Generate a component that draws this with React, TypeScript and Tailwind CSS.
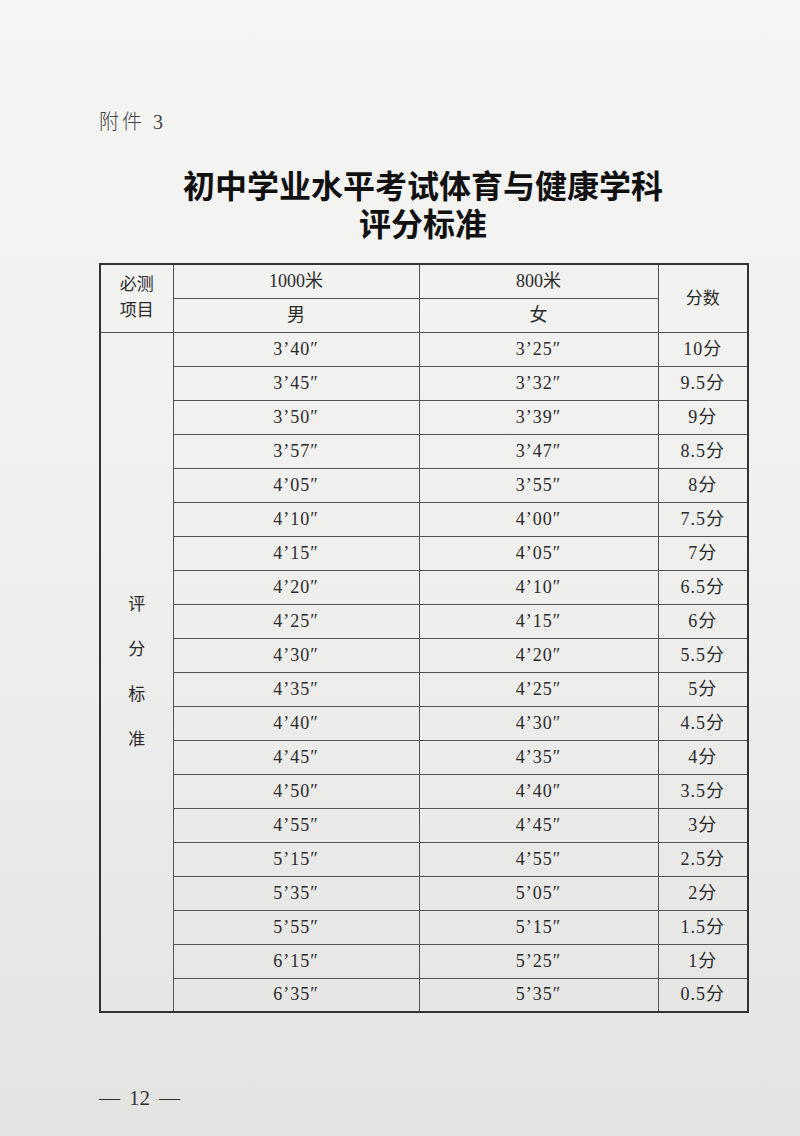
import React from 'react';

const rows: [string, string, string][] = [
    ['3’40″', '3’25″', '10分'],
    ['3’45″', '3’32″', '9.5分'],
    ['3’50″', '3’39″', '9分'],
    ['3’57″', '3’47″', '8.5分'],
    ['4’05″', '3’55″', '8分'],
    ['4’10″', '4’00″', '7.5分'],
    ['4’15″', '4’05″', '7分'],
    ['4’20″', '4’10″', '6.5分'],
    ['4’25″', '4’15″', '6分'],
    ['4’30″', '4’20″', '5.5分'],
    ['4’35″', '4’25″', '5分'],
    ['4’40″', '4’30″', '4.5分'],
    ['4’45″', '4’35″', '4分'],
    ['4’50″', '4’40″', '3.5分'],
    ['4’55″', '4’45″', '3分'],
    ['5’15″', '4’55″', '2.5分'],
    ['5’35″', '5’05″', '2分'],
    ['5’55″', '5’15″', '1.5分'],
    ['6’15″', '5’25″', '1分'],
    ['6’35″', '5’35″', '0.5分'],
];

const cell = 'border border-[#555] text-center align-middle p-0';

const App: React.FC = () => {
    return (
        <div className="w-[800px] h-[1136px] bg-linear-to-b from-[#f5f5f4] via-[#efefee] to-[#e3e3e2] text-[#2a2a2a] font-['Liberation_Serif','Noto_Sans_CJK_SC',serif] overflow-hidden">
            <div className="pt-[108px] pl-[99px] pr-[53px]">
                {/* Attachment label */}
                <div className="text-[20px] leading-[28px] text-[#444] tracking-[3px] font-light">附件 3</div>

                {/* Title */}
                <div className="mt-[29px] text-center font-['Noto_Sans_CJK_SC',sans-serif] font-bold text-[32px] leading-[38px] text-[#111]">
                    <div>初中学业水平考试体育与健康学科</div>
                    <div>评分标准</div>
                </div>

                {/* Score table */}
                <table className="mt-[22px] w-[648px] border-collapse border-2 border-[#333] text-[18px] table-fixed">
                    <colgroup>
                        <col className="w-[73px]" />
                        <col className="w-[246px]" />
                        <col className="w-[239px]" />
                        <col className="w-[90px]" />
                    </colgroup>
                    <thead>
                        <tr className="h-[34px]">
                            <td rowSpan={2} className={`${cell} text-[17px] leading-[26px]`}>
                                必测<br />项目
                            </td>
                            <td className={cell}>1000米</td>
                            <td className={cell}>800米</td>
                            <td rowSpan={2} className={`${cell} text-[17px]`}>分数</td>
                        </tr>
                        <tr className="h-[34px]">
                            <td className={cell}>男</td>
                            <td className={cell}>女</td>
                        </tr>
                    </thead>
                    <tbody>
                        {rows.map(([boy, girl, score], i) => (
                            <tr key={i} className="h-[34px]">
                                {i === 0 && (
                                    <td rowSpan={rows.length} className={`${cell} text-[17px]`}>
                                        <div className="flex flex-col items-center leading-[45px]">
                                            <span>评</span>
                                            <span>分</span>
                                            <span>标</span>
                                            <span>准</span>
                                        </div>
                                    </td>
                                )}
                                <td className={`${cell} tracking-[1px]`}>{boy}</td>
                                <td className={`${cell} tracking-[1px]`}>{girl}</td>
                                <td className={`${cell} tracking-[1px]`}>{score}</td>
                            </tr>
                        ))}
                    </tbody>
                </table>

                {/* Page number */}
                <div className="mt-[71px] flex items-center gap-[9px] text-[21px] leading-[28px] text-[#333]">
                    <span>—</span>
                    <span>12</span>
                    <span>—</span>
                </div>
            </div>
        </div>
    );
};

export default App;
